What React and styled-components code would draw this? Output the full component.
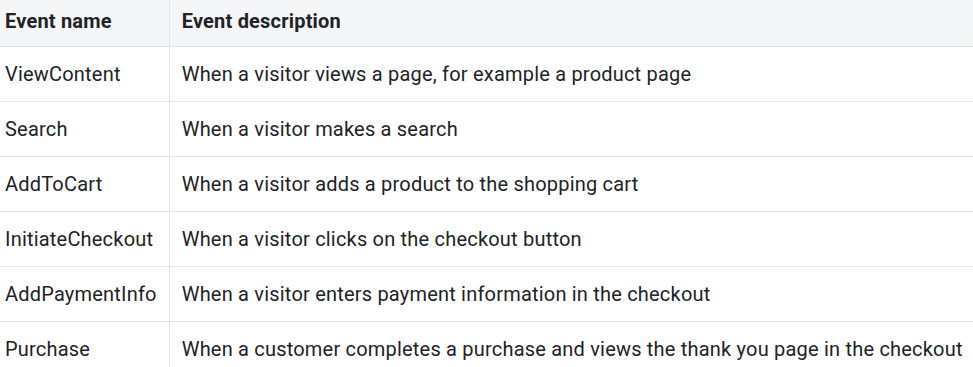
import React from "react";
import styled, { createGlobalStyle } from "styled-components";

const GlobalStyle = createGlobalStyle`
  body {
    margin: 0;
    background: #ffffff;
    font-family: Roboto, "Liberation Sans", sans-serif;
  }
`;

const Table = styled.table`
  width: 100%;
  border-collapse: collapse;
  color: #212326;
  font-size: 20px;
  letter-spacing: 0.2px;
`;

const HeadRow = styled.tr`
  background: #f4f5f7;
  height: 46px;
`;

const Row = styled.tr`
  height: 55px;
  border-top: 1px solid #e1e3e5;
`;

const Th = styled.th`
  text-align: left;
  font-weight: 700;
  padding: ${(p) => (p.$first ? "0 12px 3px 5px" : "0 12px 3px")};
  border-left: ${(p) => (p.$first ? "none" : "1px solid #e1e3e5")};
  width: ${(p) => (p.$first ? "153px" : "auto")};
`;

const Td = styled.td`
  padding: ${(p) => (p.$first ? "0 12px 0 5px" : "0 12px")};
  border-left: ${(p) => (p.$first ? "none" : "1px solid #e1e3e5")};
  white-space: nowrap;
`;

const events = [
  ["ViewContent", "When a visitor views a page, for example a product page"],
  ["Search", "When a visitor makes a search"],
  ["AddToCart", "When a visitor adds a product to the shopping cart"],
  ["InitiateCheckout", "When a visitor clicks on the checkout button"],
  ["AddPaymentInfo", "When a visitor enters payment information in the checkout"],
  [
    "Purchase",
    "When a customer completes a purchase and views the thank you page in the checkout",
  ],
];

export default function App() {
  return (
    <>
      <GlobalStyle />
      <Table>
        <thead>
          <HeadRow>
            <Th $first>Event name</Th>
            <Th>Event description</Th>
          </HeadRow>
        </thead>
        <tbody>
          {events.map(([name, desc]) => (
            <Row key={name}>
              <Td $first>{name}</Td>
              <Td>{desc}</Td>
            </Row>
          ))}
        </tbody>
      </Table>
    </>
  );
}
